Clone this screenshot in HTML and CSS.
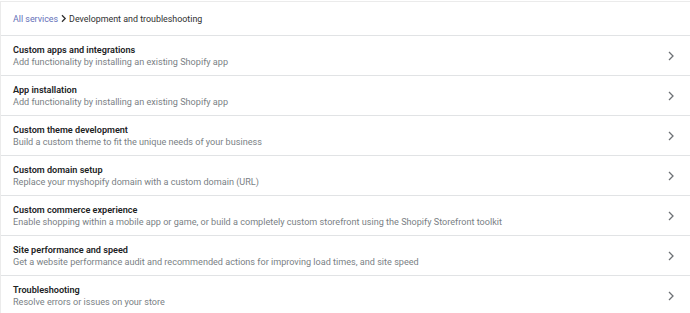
FILE: index.html
```html
<!DOCTYPE html>
<html lang="en">
<head>
<meta charset="utf-8">
<title>Development and troubleshooting</title>
<link rel="stylesheet" href="styles.css">
</head>
<body>
<div class="panel">
  <div class="crumbs">
    <a class="crumb-link" href="#">All services</a>
    <svg class="crumb-sep" width="7" height="9" viewBox="0 0 7 9"><path d="M2 1.2 L5.2 4.5 L2 7.8" fill="none" stroke="#303030" stroke-width="1.3"/></svg>
    <span class="crumb-current">Development and troubleshooting</span>
  </div>
  <ul class="list">
    <li class="row"><div class="text"><div class="title">Custom apps and integrations</div><div class="desc">Add functionality by installing an existing Shopify app</div></div><svg class="chev" width="10" height="12" viewBox="0 0 10 12"><path d="M3 2 L7 6 L3 10" fill="none" stroke="#6d7175" stroke-width="1.3"/></svg></li>
    <li class="row"><div class="text"><div class="title">App installation</div><div class="desc">Add functionality by installing an existing Shopify app</div></div><svg class="chev" width="10" height="12" viewBox="0 0 10 12"><path d="M3 2 L7 6 L3 10" fill="none" stroke="#6d7175" stroke-width="1.3"/></svg></li>
    <li class="row"><div class="text"><div class="title">Custom theme development</div><div class="desc">Build a custom theme to fit the unique needs of your business</div></div><svg class="chev" width="10" height="12" viewBox="0 0 10 12"><path d="M3 2 L7 6 L3 10" fill="none" stroke="#6d7175" stroke-width="1.3"/></svg></li>
    <li class="row"><div class="text"><div class="title">Custom domain setup</div><div class="desc">Replace your myshopify domain with a custom domain (URL)</div></div><svg class="chev" width="10" height="12" viewBox="0 0 10 12"><path d="M3 2 L7 6 L3 10" fill="none" stroke="#6d7175" stroke-width="1.3"/></svg></li>
    <li class="row"><div class="text"><div class="title">Custom commerce experience</div><div class="desc">Enable shopping within a mobile app or game, or build a completely custom storefront using the Shopify Storefront toolkit</div></div><svg class="chev" width="10" height="12" viewBox="0 0 10 12"><path d="M3 2 L7 6 L3 10" fill="none" stroke="#6d7175" stroke-width="1.3"/></svg></li>
    <li class="row"><div class="text"><div class="title">Site performance and speed</div><div class="desc">Get a website performance audit and recommended actions for improving load times, and site speed</div></div><svg class="chev" width="10" height="12" viewBox="0 0 10 12"><path d="M3 2 L7 6 L3 10" fill="none" stroke="#6d7175" stroke-width="1.3"/></svg></li>
    <li class="row"><div class="text"><div class="title">Troubleshooting</div><div class="desc">Resolve errors or issues on your store</div></div><svg class="chev" width="10" height="12" viewBox="0 0 10 12"><path d="M3 2 L7 6 L3 10" fill="none" stroke="#6d7175" stroke-width="1.3"/></svg></li>
  </ul>
</div>
</body>
</html>
```
FILE: styles.css
```css
html, body { margin: 0; padding: 0; background: #ffffff; }
body { font-family: Roboto, "Liberation Sans", sans-serif; font-size: 9.1px; color: #202223; }
.panel { border-top: 1px solid #ebebeb; border-left: 1px solid #ebebeb; margin-top: 1px; }
.crumbs { display: flex; align-items: center; gap: 2px; height: 33px; padding-left: 12px; border-bottom: 1px solid #e1e3e5; font-size: 8.9px; }
.crumb-link { color: #6470b8; text-decoration: none; }
.crumb-current { color: #303030; }
.list { list-style: none; margin: 0; padding: 0; }
.row { display: flex; align-items: center; justify-content: space-between; height: 39px; padding: 0 12px; border-bottom: 1px solid #e1e3e5; }
.title { font-weight: 600; color: #202223; line-height: 12px; }
.desc { color: #7a7f85; line-height: 12px; }
.chev { flex: none; margin-right: 2px; }
```
